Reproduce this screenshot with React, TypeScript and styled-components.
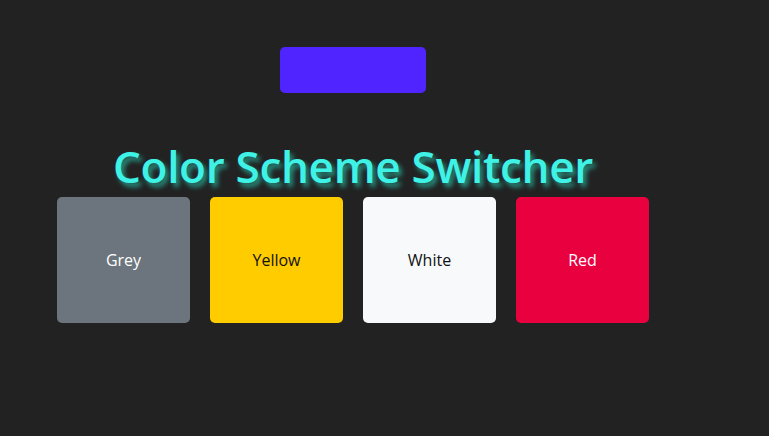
import styled, { createGlobalStyle } from "styled-components";

const GlobalStyle = createGlobalStyle`
  body {
    margin: 0;
    background: #222222;
    font-family: "Open Sans", "Noto Sans", sans-serif;
  }
`;

const schemes = [
  { name: "Grey", bg: "#6c757d", fg: "#ffffff" },
  { name: "Yellow", bg: "#ffcc00", fg: "#111111" },
  { name: "White", bg: "#f8f9fa", fg: "#111111" },
  { name: "Red", bg: "#e9003f", fg: "#ffffff" },
];

const Page = styled.div`
  width: 706px;
  height: 436px;
  display: flex;
  flex-direction: column;
  align-items: center;
  padding-top: 47px;
  box-sizing: border-box;
`;

const ToggleButton = styled.button`
  width: 146px;
  height: 46px;
  border: none;
  border-radius: 5px;
  background: #5024ff;
  cursor: pointer;
`;

const Title = styled.h1`
  margin: 46px 0 0;
  font-size: 44px;
  line-height: 54px;
  font-weight: 600;
  letter-spacing: -0.3px;
  color: #3ff2e6;
  text-shadow: 3px 4px 5px rgba(40, 175, 155, 0.85);
`;

const Swatches = styled.div`
  display: flex;
  gap: 20px;
  margin-top: 4px;
`;

const Swatch = styled.div<{ $bg: string; $fg: string }>`
  width: 133px;
  height: 126px;
  border-radius: 5px;
  background: ${(p) => p.$bg};
  color: ${(p) => p.$fg};
  display: flex;
  align-items: center;
  justify-content: center;
  font-size: 16px;
`;

export default function App() {
  return (
    <>
      <GlobalStyle />
      <Page>
        <ToggleButton aria-label="toggle" />
        <Title>Color Scheme Switcher</Title>
        <Swatches>
          {schemes.map((s) => (
            <Swatch key={s.name} $bg={s.bg} $fg={s.fg}>
              {s.name}
            </Swatch>
          ))}
        </Swatches>
      </Page>
    </>
  );
}
